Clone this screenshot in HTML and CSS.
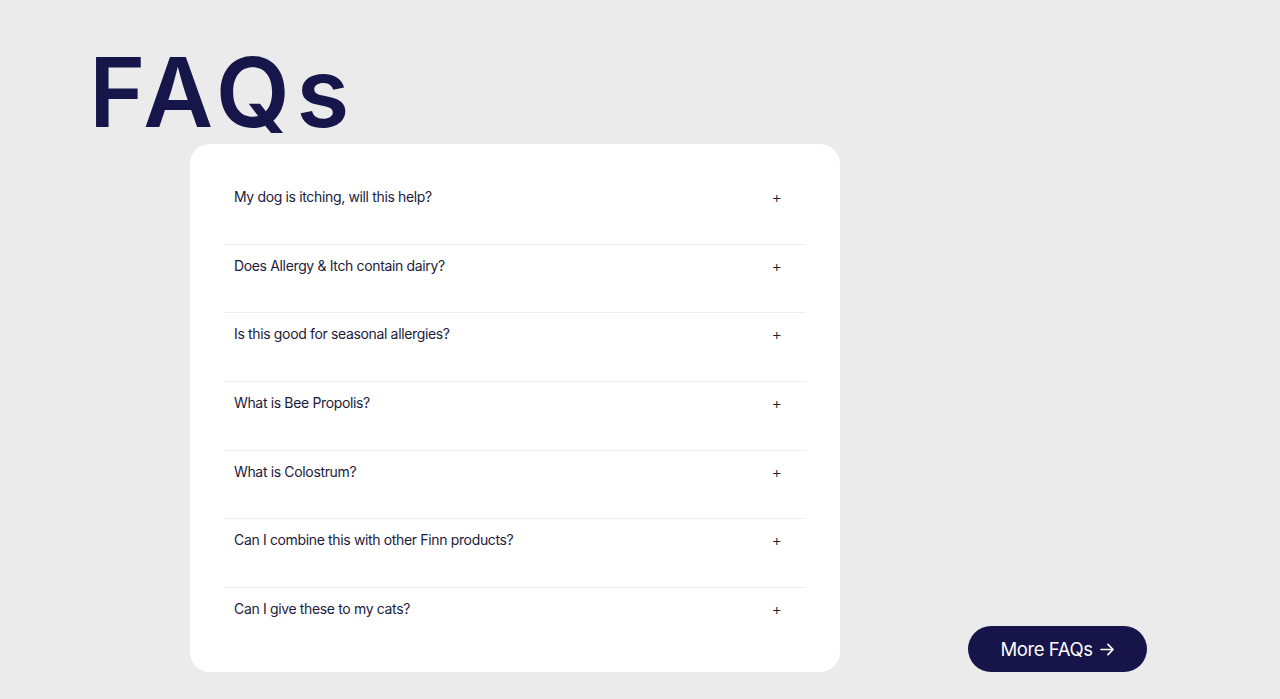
FILE: index.html
```html
<!DOCTYPE html>
<html>
<head>
<meta charset="utf-8">
<link rel="stylesheet" href="styles.css">
</head>
<body>
<main class="page">
  <h1 class="title">FAQs</h1>
  <div class="content">
    <section class="card">
      <div class="row"><span class="q">My dog is itching, will this help?</span><span class="plus">+</span></div>
      <div class="row"><span class="q">Does Allergy &amp; Itch contain dairy?</span><span class="plus">+</span></div>
      <div class="row"><span class="q">Is this good for seasonal allergies?</span><span class="plus">+</span></div>
      <div class="row"><span class="q">What is Bee Propolis?</span><span class="plus">+</span></div>
      <div class="row"><span class="q">What is Colostrum?</span><span class="plus">+</span></div>
      <div class="row"><span class="q">Can I combine this with other Finn products?</span><span class="plus">+</span></div>
      <div class="row"><span class="q">Can I give these to my cats?</span><span class="plus">+</span></div>
    </section>
    <div class="actions">
      <a class="more" href="#">More FAQs <svg width="15" height="13" viewBox="0 0 16 14"><path d="M1 7h13M8.5 1.5L14 7l-5.5 5.5" fill="none" stroke="#fff" stroke-width="1.8" stroke-linecap="round" stroke-linejoin="round"/></svg></a>
    </div>
  </div>
</main>
</body>
</html>
```
FILE: styles.css
```css
html, body {
  margin: 0;
  padding: 0;
  background: #ebebeb;
  font-family: Inter, "Liberation Sans", sans-serif;
  color: #1b1a3d;
}
.page {
  padding: 40px 0 0 88px;
}
.title {
  margin: 0 0 0 1px;
  font-size: 96px;
  font-weight: 600;
  line-height: 104px;
  letter-spacing: 6.5px;
  color: #17164a;
  height: 104px;
}
.content {
  display: flex;
  align-items: flex-end;
  margin-left: 102px;
}
.card {
  width: 650px;
  height: 528px;
  box-sizing: border-box;
  background: #fff;
  border-radius: 20px;
  padding: 31px 34px 0;
}
.row {
  display: flex;
  justify-content: space-between;
  align-items: flex-start;
  height: 68.7px;
  box-sizing: border-box;
  padding: 11px 24px 0 10px;
  border-top: 1px solid #efefef;
}
.row:first-child {
  border-top-color: transparent;
}
.q {
  font-size: 14px;
  line-height: 20px;
  letter-spacing: -0.35px;
  color: #1c1b3b;
}
.plus {
  font-size: 16px;
  line-height: 20px;
  font-weight: 300;
  color: #222;
}
.actions {
  margin-left: 128px;
}
.more {
  display: flex;
  align-items: center;
  gap: 7px;
  width: 179px;
  height: 46px;
  box-sizing: border-box;
  justify-content: center;
  border-radius: 23px;
  background: #17144a;
  color: #fff;
  text-decoration: none;
  font-size: 18.5px;
  letter-spacing: -0.4px;
}
```
